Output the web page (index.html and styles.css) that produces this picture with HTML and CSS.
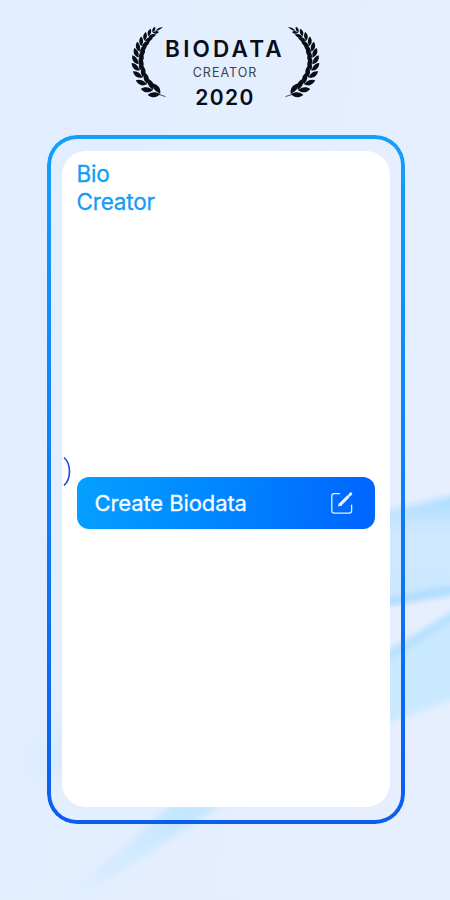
FILE: index.html
```html
<!DOCTYPE html>
<html lang="en">
<head>
  <meta charset="UTF-8">
  <title>Biodata Creator</title>
  <link rel="stylesheet" href="styles.css">
</head>
<body>
  <!-- soft ribbons behind the page -->
  <svg class="backdrop" viewBox="0 0 450 900">
    <defs>
      <linearGradient id="ribbonTop" x1="0" y1="0" x2="0" y2="1">
        <stop offset="0" stop-color="#a4dcff"/>
        <stop offset="0.35" stop-color="#cfe8ff"/>
        <stop offset="1" stop-color="#cae7ff"/>
      </linearGradient>
      <linearGradient id="ribbonLow" x1="1" y1="0" x2="0" y2="1">
        <stop offset="0.2" stop-color="#c4e6ff"/>
        <stop offset="0.9" stop-color="#dfeeff"/>
      </linearGradient>
      <filter id="soft"><feGaussianBlur stdDeviation="3.5"/></filter>
      <filter id="softer" x="-100%" y="-100%" width="300%" height="300%"><feGaussianBlur stdDeviation="12"/></filter>
    </defs>
    <path filter="url(#softer)" fill="#d5eaff" d="M30 760 L70 715 L76 770 L35 775Z"/>
    <path filter="url(#soft)" fill="url(#ribbonTop)" d="M370 515 L470 492 L470 591 L370 607Z"/>
    <path filter="url(#soft)" fill="none" stroke="#a3d7ff" stroke-width="6" d="M370 605 L470 587"/>
    <path filter="url(#soft)" fill="#cae9ff" d="M370 664 L470 602 L470 693 L370 730Z"/>
    <path filter="url(#soft)" fill="none" stroke="#acdcff" stroke-width="6" d="M370 667 L470 606"/>
    <path filter="url(#soft)" fill="url(#ribbonLow)" d="M176 800 L228 800 L185 829 L135 862 L70 905 L80 880 L130 842Z"/>
  </svg>

  <div class="page">
    <div class="award">
      <svg class="laurel" viewBox="0 0 36 72">
        <defs>
          <g id="pair">
            <path d="M0 1.6C-4 .6 -6.6 -2.4 -5.4 -7.6C-3 -6.8 -.5 -4.4 -.3 -1.4Z"/>
            <path d="M0 1.6C4 .6 6.6 -2.4 5.4 -7.6C3 -6.8 .5 -4.4 .3 -1.4Z"/>
          </g>
          <g id="branch">
            <use href="#pair" transform="translate(27.5 67) rotate(-66) scale(1.15 1.2)"/>
            <use href="#pair" transform="translate(20.5 63) rotate(-54) scale(1.15)"/>
            <use href="#pair" transform="translate(14.8 57) rotate(-40) scale(1.12)"/>
            <use href="#pair" transform="translate(10.8 50) rotate(-27) scale(1.08)"/>
            <use href="#pair" transform="translate(8.2 43) rotate(-16) scale(1.04)"/>
            <use href="#pair" transform="translate(7.4 36.5) rotate(-5) scale(1.02)"/>
            <use href="#pair" transform="translate(7.8 30) rotate(6)"/>
            <use href="#pair" transform="translate(9 24.2) rotate(16) scale(.96)"/>
            <use href="#pair" transform="translate(11.4 18.8) rotate(27) scale(.9)"/>
            <use href="#pair" transform="translate(14.6 13.8) rotate(37) scale(.84)"/>
            <use href="#pair" transform="translate(18.4 9.6) rotate(46) scale(.74)"/>
            <use href="#pair" transform="translate(22.4 6) rotate(54) scale(.6)"/>
            <path d="M24.5 5.2Q27 .8 32 1.2Q29 3.8 24.5 5.2Z"/>
            <path class="stem" d="M28 68.5L34.5 70.6"/>
          </g>
        </defs>
        <use href="#branch"/>
      </svg>
      <div class="award-text">
        <div class="award-title">BIODATA</div>
        <div class="award-sub">CREATOR</div>
        <div class="award-year">2020</div>
      </div>
      <svg class="laurel flip" viewBox="0 0 36 72"><use href="#branch"/></svg>
    </div>

    <div class="frame">
      <div class="screen">
        <h1>Bio<br>Creator</h1>
        <svg class="arc" viewBox="0 0 10 32"><path d="M1 1.5C8.3 8 8.3 23 1 29.5"/></svg>
        <button class="create">
          <span>Create Biodata</span>
          <svg class="edit" viewBox="0 0 24 24">
            <path class="box" d="M9.5 2.6H4.2Q1.8 2.6 1.8 5V19.7Q1.8 22.1 4.2 22.1H19.2Q21.6 22.1 21.6 19.7V14.2"/>
            <path class="pen" d="M10.4 13.4L18.1 5.6"/>
            <path class="pen" d="M20 3.6L20.8 2.8"/>
            <path class="tip" d="M9 11.8L11.8 14.6L8 15.6Z"/>
          </svg>
        </button>
      </div>
    </div>
  </div>
</body>
</html>
```
FILE: styles.css
```css
* {
  box-sizing: border-box;
}

body {
  margin: 0;
  height: 900px;
  overflow: hidden;
  font-family: Inter, "Liberation Sans", sans-serif;
  background: linear-gradient(100deg, #e1eeff, #e4eeff 50%, #e7effe);
}

.backdrop {
  position: absolute;
  top: 0;
  left: 0;
  width: 450px;
  height: 900px;
}

.page {
  position: relative;
  display: flex;
  flex-direction: column;
  align-items: center;
  padding-top: 26px;
}

.award {
  display: flex;
  justify-content: space-between;
  width: 189px;
  height: 109px;
  color: #080d16;
}

.laurel {
  width: 36px;
  height: 72px;
  flex: none;
  fill: #080d16;
}

.flip {
  transform: scaleX(-1);
}

.stem {
  stroke: #080d16;
  stroke-width: 0.7;
}

.award-text {
  display: flex;
  flex-direction: column;
  align-items: center;
  padding-top: 11px;
  margin: 0 -6px;
  white-space: nowrap;
}

.award-title {
  font-size: 22.5px;
  line-height: 24px;
  font-weight: 600;
  letter-spacing: 3.2px;
}

.award-sub {
  font-size: 12.5px;
  line-height: 24px;
  letter-spacing: 1px;
  color: #3c424c;
}

.award-year {
  font-size: 21px;
  line-height: 25px;
  font-weight: 600;
  letter-spacing: 1.4px;
}

.frame {
  position: relative;
  width: 358px;
  height: 689px;
  margin-left: 1px;
  padding: 16px 15px;
}

/* gradient outline, see-through inside */
.frame::before {
  content: "";
  position: absolute;
  inset: 0;
  padding: 4px;
  border-radius: 30px;
  background: linear-gradient(#14a0fa, #0b5eee);
  mask: linear-gradient(#000 0 0) content-box exclude, linear-gradient(#000 0 0);
}

.screen {
  position: relative;
  height: 656px;
  padding: 9px 15px 0;
  border-radius: 24px;
  background: #fff;
}

h1 {
  margin: 0;
  height: 317px;
  font-size: 22.5px;
  line-height: 28px;
  font-weight: 400;
  letter-spacing: -0.2px;
  color: #159cf5;
  -webkit-text-stroke: 0.3px #159cf5;
}

.arc {
  position: absolute;
  left: 1px;
  top: 305px;
  width: 10px;
  height: 32px;
  fill: none;
  stroke: #2348c8;
  stroke-width: 1.6;
}

.create {
  display: flex;
  align-items: center;
  justify-content: space-between;
  width: 298px;
  height: 52px;
  padding: 0 21px 0 18px;
  border: none;
  border-radius: 12px;
  background: linear-gradient(100deg, #05a0ff, #0088ff 45%, #0066ff 95%);
  color: #f5faff;
  font-family: inherit;
  font-size: 22px;
  letter-spacing: -0.1px;
  -webkit-text-stroke: 0.3px #f5faff;
}

.edit {
  width: 24px;
  height: 24px;
  fill: none;
  stroke: #e5f1ff;
  stroke-linecap: round;
  stroke-linejoin: round;
}

.box {
  stroke-width: 1.3;
}

.pen {
  stroke-width: 3;
}

.tip {
  fill: #e5f1ff;
  stroke: none;
}
```
